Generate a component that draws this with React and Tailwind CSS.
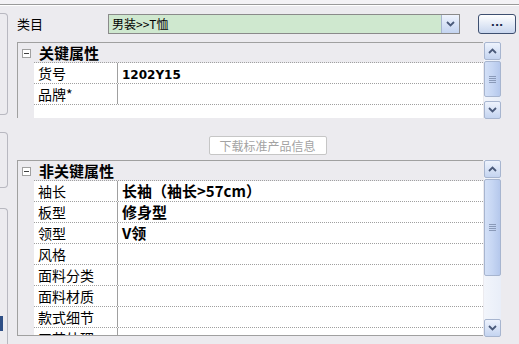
import React from "react";

const CJK = { fontFamily: '"Noto Sans CJK SC", "DejaVu Sans", sans-serif' };

function Chevron({ up }) {
  return (
    <svg width="9" height="6" viewBox="0 0 9 6" className="block">
      {up ? (
        <path d="M1 5 L4.5 1.5 L8 5" stroke="#4a5a7a" strokeWidth="1.8" fill="none" />
      ) : (
        <path d="M1 1 L4.5 4.5 L8 1" stroke="#4a5a7a" strokeWidth="1.8" fill="none" />
      )}
    </svg>
  );
}

function SbButton({ up }) {
  return (
    <div className="h-[18px] w-[17px] rounded-[2px] border border-[#a7b5cf] bg-gradient-to-b from-[#eef3fd] to-[#c4d4f0] flex items-center justify-center">
      <Chevron up={up} />
    </div>
  );
}

function Scrollbar({ thumbH }) {
  return (
    <div className="w-[17px] h-full flex flex-col bg-gradient-to-r from-[#f2f5fb] to-[#e9eef8]">
      <SbButton up />
      <div className="mt-[1px] w-[17px] rounded-[2px] border border-[#a7b5cf] bg-gradient-to-r from-[#d3e0f7] via-[#c6d6f3] to-[#b5c8ec] flex items-center justify-center" style={{ height: thumbH }}>
        <div className="flex flex-col gap-[1px]">
          <div className="w-[7px] h-[1px] bg-[#8a9ab8]" />
          <div className="w-[7px] h-[1px] bg-[#8a9ab8]" />
          <div className="w-[7px] h-[1px] bg-[#8a9ab8]" />
          <div className="w-[7px] h-[1px] bg-[#8a9ab8]" />
        </div>
      </div>
      <div className="flex-1" />
      <SbButton />
    </div>
  );
}

function Row({ label, value }) {
  return (
    <div className="flex h-[21px] shrink-0">
      <div className="w-[16px] bg-[#ecebef]" />
      <div className="flex flex-1 bg-white border-b border-dotted border-[#a0a0a0]">
        <div className="w-[84px] border-r border-[#a0a0a0] pl-[4px] text-[14px] leading-[20px] text-black" style={CJK}>
          {label}
        </div>
        <div className="flex-1 pl-[4px] text-[15px] leading-[20px] font-bold text-black" style={CJK}>
          {value}
        </div>
      </div>
    </div>
  );
}

function Header({ title }) {
  return (
    <div className="flex h-[20px] shrink-0">
      <div className="w-[16px] flex items-center justify-center">
        <div className="w-[9px] h-[9px] border border-[#a0a0a0] bg-white flex items-center justify-center">
          <div className="w-[5px] h-[1px] bg-[#404040]" />
        </div>
      </div>
      <div className="flex-1 border-b border-dotted border-[#a0a0a0] pl-[5px] text-[15px] leading-[19px] font-bold text-black" style={CJK}>
        {title}
      </div>
    </div>
  );
}

export default function App() {
  return (
    <div className="w-[519px] h-[344px] overflow-hidden bg-[#ecebef] flex flex-col">
      <div className="h-[4px] bg-[#f3f2f5] shrink-0" />
      <div className="h-[1px] bg-[#9a9a9a] shrink-0" />
      <div className="h-[1px] bg-white shrink-0" />
      <div className="flex flex-1 min-h-0">
        {/* left cut-off panels */}
        <div className="w-[8px] flex flex-col shrink-0">
          <div className="mt-[7px] h-[102px] rounded-r-[4px] border border-l-0 border-[#b8b8c0]" />
          <div className="mt-[17px] h-[56px] rounded-r-[4px] border border-l-0 border-[#b8b8c0]" />
          <div className="mt-[20px] flex-1 rounded-tr-[4px] border border-l-0 border-b-0 border-[#b8b8c0] relative">
            <div className="absolute left-0 top-[107px] w-[3px] h-[15px] bg-[#2f4f86]" />
          </div>
        </div>
        <div className="ml-[9px] flex flex-col w-[502px]">
          {/* category row */}
          <div className="mt-[8px] flex items-center h-[20px] shrink-0">
            <div className="w-[91px] text-[13px] text-black" style={CJK}>类目</div>
            <div className="w-[352px] h-[20px] border border-[#8a8a8a] bg-[#cfe8cf] flex">
              <div className="flex-1 pl-[3px] text-[12px] leading-[18px] text-black" style={CJK}>男装&gt;&gt;T恤</div>
              <div className="w-[18px] h-[18px] border-l border-[#a7b5cf] bg-gradient-to-b from-[#eef3fd] to-[#c4d4f0] flex items-center justify-center">
                <Chevron />
              </div>
            </div>
            <div className="ml-[18px] w-[38px] h-[20px] rounded-[3px] border border-[#3e4f70] bg-gradient-to-b from-white to-[#c8d6ee] flex items-center justify-center text-[11px] font-bold text-[#1c2a4a]" style={{ fontFamily: '"DejaVu Sans", sans-serif' }}>
              <span className="leading-none -mt-[4px]">...</span>
            </div>
          </div>

          {/* key attributes grid */}
          <div className="mt-[8px] flex h-[77px] shrink-0">
            <div className="w-[466px] h-[76px] border-t border-l border-[#a0a0a0] flex flex-col overflow-hidden">
              <Header title="关键属性" />
              <Row label="货号" value={<span style={{ fontFamily: '"DejaVu Sans", sans-serif', fontSize: 12 }}>1202Y15</span>} />
              <Row label="品牌*" value="" />
              <div className="flex flex-1">
                <div className="w-[16px]" />
                <div className="flex-1 bg-white" />
              </div>
            </div>
            <div className="ml-[1px]">
              <Scrollbar thumbH={36} />
            </div>
          </div>

          {/* button */}
          <div className="mt-[17px] flex justify-center shrink-0 pr-[1px]">
            <div className="w-[118px] h-[19px] rounded-[2px] border border-[#c6c6c6] bg-white flex items-center justify-center text-[12px] text-[#a3a3a3]" style={CJK}>
              下载标准产品信息
            </div>
          </div>

          {/* non-key attributes grid */}
          <div className="mt-[5px] flex h-[177px] shrink-0">
            <div className="w-[466px] h-[176px] border-t border-l border-b border-[#a0a0a0] flex flex-col overflow-hidden">
              <Header title="非关键属性" />
              <Row label="袖长" value="长袖（袖长>57cm）" />
              <Row label="板型" value="修身型" />
              <Row label="领型" value="V领" />
              <Row label="风格" value="" />
              <Row label="面料分类" value="" />
              <Row label="面料材质" value="" />
              <Row label="款式细节" value="" />
              <Row label="工艺处理" value="" />
            </div>
            <div className="ml-[1px]">
              <Scrollbar thumbH={97} />
            </div>
          </div>
        </div>
      </div>
    </div>
  );
}
